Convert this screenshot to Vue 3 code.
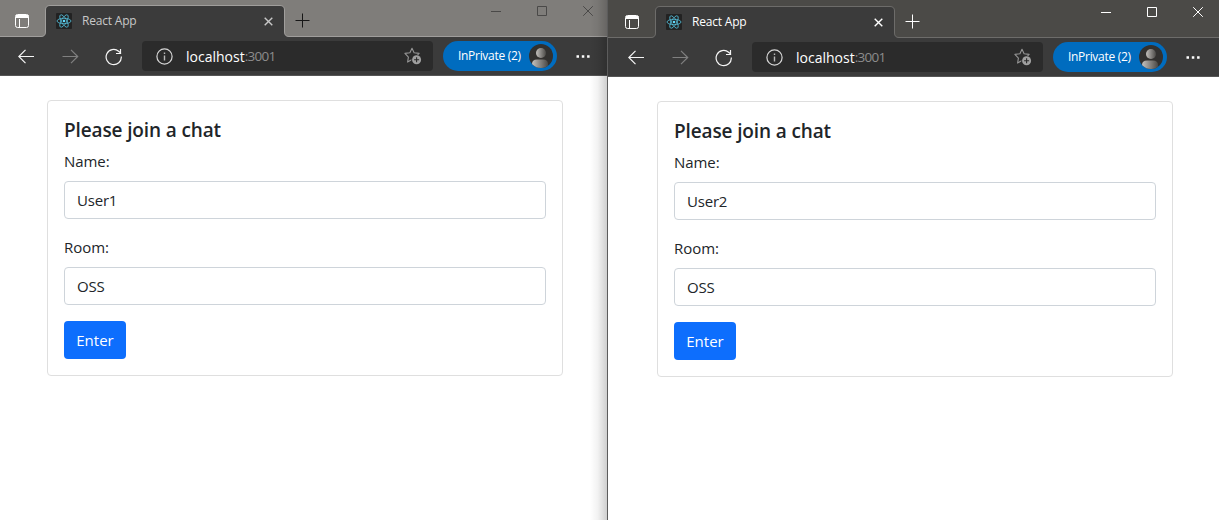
<script setup>
import { reactive } from 'vue'

const windows = reactive([
  { id: 'left', name: 'User1', room: 'OSS', active: false },
  { id: 'right', name: 'User2', room: 'OSS', active: true }
])
</script>

<template>
  <main class="desktop">
    <section v-for="w in windows" :key="w.id" class="window" :class="w.active ? 'active' : 'inactive'">
      <header class="titlebar">
        <svg class="tab-menu" width="15" height="15" viewBox="0 0 15 15">
          <rect x=".5" y=".5" width="13" height="13" rx="2" fill="none" stroke="#fff" />
          <path d="M1 1h12.500v3H1z" fill="#fff" />
          <path d="M4.500 5v8" stroke="#fff" />
        </svg>
        <div class="tab">
          <svg class="tab-shape" width="250" height="33" viewBox="0 0 250 33">
            <path d="M0 31.5H1Q5.5 31.5 5.5 27V5Q5.5 .5 10 .5H240Q244.500 .5 244.500 5V27Q244.500 31.500 249 31.500H250V33H0Z" fill="#3b3b3b" />
            <path class="tab-line" d="M0 31.5H1Q5.5 31.5 5.5 27V5Q5.5 .5 10 .5H240Q244.500 .5 244.500 5V27Q244.500 31.500 249 31.500H250" fill="none" />
          </svg>
          <svg class="favicon" width="16" height="16" viewBox="0 0 16 16">
            <rect width="16" height="16" rx="1" fill="#222" />
            <g fill="none" stroke="#53bcd8" stroke-width=".8">
              <ellipse cx="8" cy="8" rx="7" ry="2.700" />
              <ellipse cx="8" cy="8" rx="7" ry="2.700" transform="rotate(60 8 8)" />
              <ellipse cx="8" cy="8" rx="7" ry="2.700" transform="rotate(120 8 8)" />
            </g>
            <circle cx="8" cy="8" r="1.300" fill="#61dafb" />
          </svg>
          <span class="tab-title">React App</span>
          <svg class="tab-close" width="9" height="9" viewBox="0 0 9 9"><path d="M.7 .7l7.600 7.600M8.300 .7L.7 8.300" /></svg>
        </div>
        <svg class="new-tab" width="15" height="15" viewBox="0 0 15 15"><path d="M7.500 .5v14M.5 7.500h14" /></svg>
        <div class="controls">
          <svg width="11" height="11" viewBox="0 0 11 11"><path d="M0 5.500h10" /></svg>
          <svg width="11" height="11" viewBox="0 0 11 11"><path d="M.5 .5h9v9h-9z" /></svg>
          <svg width="11" height="11" viewBox="0 0 11 11"><path d="M.2 .2l9.600 9.600M9.800 .2L.2 9.800" /></svg>
        </div>
      </header>

      <nav class="toolbar">
        <svg class="back" width="17" height="16" viewBox="0 0 17 16"><path d="M16 7.500H.8M7.500 .8L.8 7.500L7.500 14.200" /></svg>
        <svg class="forward" width="17" height="16" viewBox="0 0 17 16"><path d="M.5 7.500H15.700M9 .8L15.700 7.500L9 14.200" /></svg>
        <svg class="reload" width="18" height="18" viewBox="0 0 18 18"><path d="M16.300 8.500a7.600 7.600 0 1 1-2.700-5.300l2.500 2.200M15.500 1v4.500H11" /></svg>
        <div class="address">
          <svg class="info" width="17" height="17" viewBox="0 0 17 17">
            <circle cx="8.500" cy="8.500" r="7.600" fill="none" stroke="#d6d6d6" stroke-width="1.200" />
            <path d="M8.500 7.500v5M8.500 4.500v1.500" stroke="#b8b8b8" stroke-width="1.400" />
          </svg>
          <span class="host">localhost</span><span class="port">:3001</span>
          <svg class="star" width="18" height="18" viewBox="0 0 18 18">
            <path d="M8 1.300l2.100 4.400 5 .7-3.600 3.600.8 5L8 12.600l-4.400 2.500.8-5L.9 6.400l5-.7z" fill="none" stroke="#969696" stroke-width="1.100" stroke-linejoin="round" />
            <circle cx="12.600" cy="12.700" r="5.300" fill="#2b2b2b" />
            <circle cx="12.600" cy="12.700" r="4.500" fill="#a0a0a0" />
            <path d="M12.600 10.200v5M10.100 12.700h5" stroke="#2b2b2b" stroke-width="1.100" />
          </svg>
        </div>
        <div class="private">
          <span class="private-label">InPrivate (2)</span>
          <svg width="24" height="24" viewBox="0 0 24 24">
            <defs>
              <linearGradient :id="'shade-' + w.id"><stop offset="0" stop-color="#c4c1bd" /><stop offset="1" stop-color="#4b4946" /></linearGradient>
              <clipPath :id="'round-' + w.id"><circle cx="12" cy="12" r="12" /></clipPath>
            </defs>
            <circle cx="12" cy="12" r="12" fill="#33312f" />
            <g :clip-path="`url(#round-${w.id})`" :fill="`url(#shade-${w.id})`">
              <circle cx="12" cy="9" r="5" />
              <path d="M3 24V20Q3 15.500 8 15.500H14Q19 15.500 19 20V24Z" />
            </g>
          </svg>
        </div>
        <svg class="more" width="14" height="3" viewBox="0 0 14 3"><path d="M.5 .3h2.500v2.400H.5zM5.800 .3h2.500v2.400H5.800zM11.100 .3h2.500v2.400h-2.500z" fill="#fff" /></svg>
      </nav>

      <form class="card" @submit.prevent>
        <h5>Please join a chat</h5>
        <label :for="w.id + '-name'">Name:</label>
        <input :id="w.id + '-name'" v-model="w.name" type="text" />
        <label :for="w.id + '-room'">Room:</label>
        <input :id="w.id + '-room'" v-model="w.room" type="text" />
        <button type="submit">Enter</button>
      </form>
    </section>
  </main>
</template>

<style>
body { margin: 0; background: #fff; overflow: hidden; }
</style>

<style scoped>
* { box-sizing: border-box; }
svg { display: block; flex: none; }
.desktop { display: flex; width: 1219px; height: 520px; font-family: "Open Sans", "Noto Sans", sans-serif; }
.window { position: relative; height: 520px; background: #fff; overflow: hidden; }
.inactive { width: 607px; --bar: #7f7d7a; --line: #a09e9c; --ctl: #4a4948; --plus: #171717; --tab: #c8c8c8; --pad: 0px; }
.active { width: 612px; border-left: 1px solid #5c5c5c; --bar: #4b4a47; --line: #6d6c6a; --ctl: #fff; --plus: #fff; --tab: #fff; --pad: 2px; padding-top: 1px; }
.active::before { content: ""; position: absolute; top: 0; left: 0; right: 0; height: 1px; background: var(--bar); }
.inactive::after { content: ""; position: absolute; top: 0; right: 0; bottom: 0; width: 17px; background: linear-gradient(to right, rgba(0,0,0,0), rgba(0,0,0,.05) 45%, rgba(0,0,0,.19)); }
.titlebar { display: flex; height: 37px; padding-left: calc(15px + var(--pad)); background: var(--bar); box-shadow: inset 0 -1px var(--line); }
.tab-menu { margin-top: 14px; }
.tab { position: relative; display: flex; width: 240px; height: 32px; margin: 5px 0 0 15px; padding-left: 11px; }
.tab-shape { position: absolute; left: -5px; top: 0; }
.tab-line { stroke: var(--line); }
.favicon { position: relative; margin-top: 8px; }
.tab-title { position: relative; margin-left: 10px; width: 80px; line-height: 31px; font-size: 12px; letter-spacing: -.2px; color: var(--tab); white-space: nowrap; }
.tab-close { position: relative; margin: 12px 12px 0 auto; fill: none; stroke: var(--tab); stroke-width: 1.4; }
.new-tab { margin: 13px 0 0 10px; fill: none; stroke: var(--plus); }
.controls { display: flex; gap: 35px; margin: 6px 0 0 181px; fill: none; stroke: var(--ctl); }
.toolbar { display: flex; align-items: center; height: 39px; padding-left: calc(18px + var(--pad)); background: #3b3b3b; border-bottom: 1px solid #555; }
.back, .forward, .reload { margin-top: 1px; fill: none; stroke: #f5f5f5; stroke-width: 1.2; }
.forward { margin-left: 27px; stroke: #808080; }
.reload { margin-left: 26px; }
.address { display: flex; align-items: center; width: 291px; height: 30px; margin-left: 19px; padding: 0 11px 0 14px; background: #2b2b2b; border-radius: 4px; font-size: 14px; color: #fff; }
.host { margin-left: 13px; letter-spacing: 0; }
.port { color: #8c8c8c; font-size: 13.500px; letter-spacing: -.7px; }
.star { margin-left: auto; }
.private { display: flex; align-items: center; width: 114px; height: 30px; margin-left: 10px; padding: 0 4px 0 15px; justify-content: space-between; border-radius: 15px; background: #006cbf; color: #fff; font-size: 12px; letter-spacing: -.3px; white-space: nowrap; }
.private-label { margin-top: -1px; }
.more { margin-left: 19px; }
.card { width: 516px; margin: 24px 0 0 calc(47px + var(--pad)); padding: 16px; border: 1px solid #dfdfdf; border-radius: 4px; color: #212529; font-size: 15px; }
h5 { margin: 0 0 8px; padding-top: 2px; font-size: 19px; font-weight: 600; line-height: 22px; letter-spacing: -.13px; white-space: nowrap; }
label { display: block; width: max-content; height: 24px; margin-bottom: 8px; line-height: 24px; letter-spacing: -.05px; }
input { display: block; width: 100%; height: 38px; margin: 0 0 16px; padding: 6px 12px; border: 1px solid #ced4da; border-radius: 4px; background: #fff; color: #212529; font: 15px/24px "Open Sans", "Noto Sans", sans-serif; letter-spacing: -.2px; outline: none; }
button { display: block; width: 62px; height: 38px; padding: 0; border: 0; border-radius: 4px; background: #0d6efd; color: #fff; font: 15px/38px "Open Sans", "Noto Sans", sans-serif; }
</style>
